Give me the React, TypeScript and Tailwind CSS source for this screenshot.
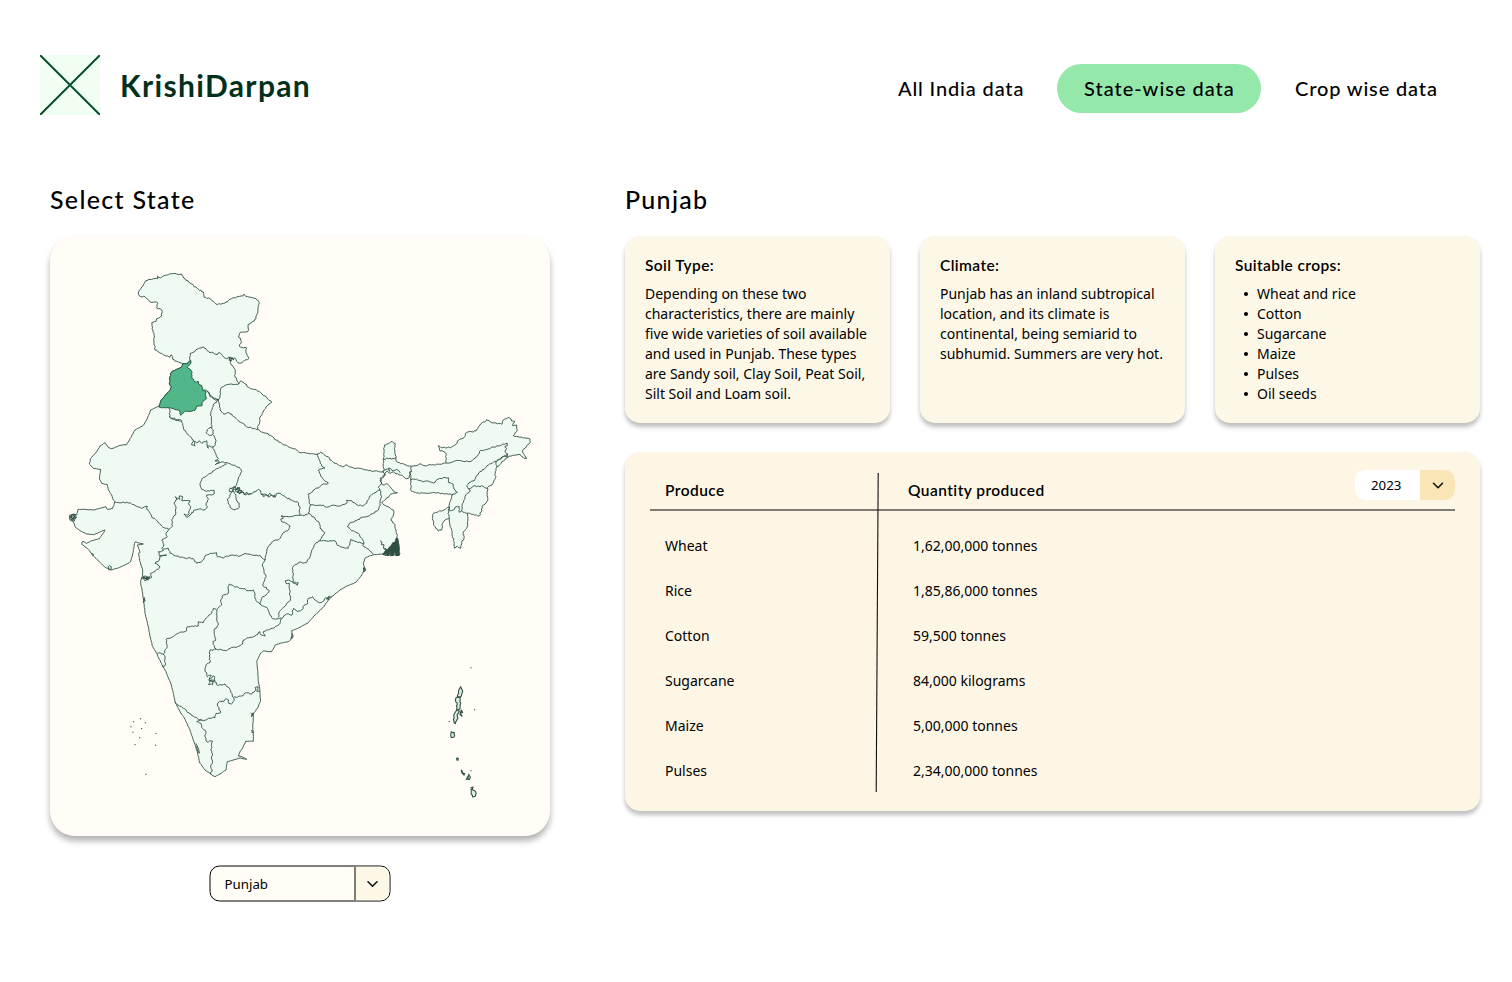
import React from "react";

type Point = [number, number];

// Map sections are stored at three units per pixel, relative to a section origin.
function section(ox: number, oy: number, data: string): Point[] {
  return data
    .trim()
    .split(/\s+/)
    .map((pair) => {
      const [x, y] = pair.split(",").map(Number);
      return [ox + x / 3, oy + y / 3] as Point;
    });
}

const north = (d: string) => section(130, 262, d);
const west = (d: string) => section(60, 400, d);
const central = (d: string) => section(200, 400, d);
const northEast = (d: string) => section(370, 405, d);
const south = (d: string) => section(130, 550, d);
const east = (d: string) => section(200, 530, d);
const islands = (d: string) => section(430, 655, d);

const noise = (x: number, y: number) => {
  const v = Math.sin(x * 12.9898 + y * 78.233) * 43758.5453;
  return (v - Math.floor(v)) * 2 - 1;
};

// Adds small wiggles between the surveyed points of a border.
function roughen(points: Point[], amount: number): Point[] {
  const out: Point[] = [];
  points.forEach((p, i) => {
    out.push(p);
    const q = points[i + 1];
    if (!q) return;
    const dx = q[0] - p[0];
    const dy = q[1] - p[1];
    const len = Math.hypot(dx, dy);
    const steps = Math.floor(len / 1.4);
    for (let s = 1; s < steps; s++) {
      const t = s / steps;
      const x = p[0] + dx * t;
      const y = p[1] + dy * t;
      const n = noise(x, y) * amount;
      out.push([x - (dy / len) * n, y + (dx / len) * n]);
    }
  });
  return out;
}

const toPath = (points: Point[], close = false) =>
  "M" + points.map(([x, y]) => `${x.toFixed(1)} ${y.toFixed(1)}`).join("L") + (close ? "Z" : "");

const outline: Point[] = [
  ...roughen(
    [
      ...north(
        "88,430 95,412 105,400 115,390 125,375 118,365 120,345 125,330 140,322 155,315 158,305 150,302 140,298 128,292 124,278 120,286 108,282 95,274 75,264 72,240 72,215 66,200 65,182 78,178 80,170 95,162 97,148 90,140 80,138 84,124 75,120 60,120 50,110 45,104 28,102 26,88 35,75 45,60 55,52 75,50 84,50 82,42 92,48 105,40 125,35 140,36 155,36 165,50 175,60 190,70 205,82 220,90 223,106 240,110 250,118 262,128 280,124 292,120 305,110 320,105 338,102 341,97 348,104 362,106 375,108 388,122 384,140 382,155 378,170 365,182 354,188 354,208 332,210 326,222 334,238 328,252 340,258 350,258 348,272 356,290 340,298 330,304 320,298 315,288 305,292 300,300 310,315 316,325 314,340 320,352 326,366 333,356 345,366 362,380 375,382 392,392 405,402 425,421 408,435 400,450 390,465",
      ),
      ...central(
        "180,62 172,88 185,96 200,100 215,108 228,120 245,130 260,136 275,144 290,150 300,158 320,160 345,163 352,162 362,156 372,164 385,170 390,180 405,190 415,195 432,200 438,194 448,200 465,206 480,205 495,210 515,214 535,214 548,216 553,208 550,195",
      ),
      ...northEast(
        "40,162 42,140 43,120 55,116 66,109 76,116 73,130 76,150 78,160 80,170 92,176 108,180 124,184 135,182 150,176 165,182 185,180 205,178 229,174 228,145 222,140 210,138 205,122 218,128 232,128 245,126 258,118 262,108 280,100 290,82 305,80 318,78 330,60 350,44 362,52 378,54 395,58 400,45 418,38 425,48 435,50 428,62 440,60 442,75 430,92 445,95 455,96 468,100 480,102 481,112 472,120 458,135 460,145 470,160 462,160 450,148 438,150 418,153 400,168 380,187 376,200 376,220 366,240 352,248 352,268 354,285 340,300 328,333 310,328 292,325 294,345 290,370 280,380 282,400 275,412 272,430 262,424 254,430 252,410 246,385 240,360 238,340 225,345 218,355 215,375 205,378 195,365 188,345 188,328 205,320 222,315 238,306 240,290 245,275 250,268 230,266 200,264 170,265 140,264 124,258 122,225 122,212 120,200 118,218 105,220 92,210 78,206 70,200 60,205 52,198 45,205 42,215 30,228 38,240 52,236 60,245 70,258 82,263 72,264 58,272 48,282 35,292 42,300 60,308 70,315 70,330 62,345 72,355 78,375 82,400 86,420 88,450 45,452 45,440",
      ),
    ],
    0.65,
  ),
  ...roughen(
    [
      ...east(
        "550,72 520,74 508,78 495,85 490,100 495,118 485,135 468,157 440,168 420,180 405,192 385,210 370,232 345,255 325,278 300,292 275,302 276,325 265,335 240,340 226,345 215,365 205,365 192,362 180,372 170,395",
      ),
      ...south(
        "382,350 385,395 388,410 390,425 391,455 385,470 370,492 370,510 368,530 370,545 370,574 347,574 340,590 330,605 325,618 335,620 350,628 330,624 310,630 292,635 288,660 270,672 255,680 242,672 225,660 210,640 200,600 190,570 180,540 165,508 150,485 135,455 130,430 122,400 108,365 100,352 88,328 80,310 68,290 60,260 55,230 45,190 42,160 36,120 32,100 32,92 38,75",
      ),
      ...west(
        "248,510 240,485 235,460 240,458 232,435 250,432 225,426 222,440 218,465 212,485 195,495 175,504 155,510 135,502 118,485 98,465 85,448 65,432 68,424 80,430 95,422 118,416 128,402 135,390 120,396 100,404 80,402 60,392 45,380 42,368 30,360 28,346 42,342 50,345 54,328 75,328 100,330 120,325 138,320 142,328 158,325 165,305 160,300 155,285 145,270 142,254 125,250 118,235 122,208 100,205 88,192 92,175 110,155 120,138 135,128 145,142 155,146 180,136 200,134 215,108 225,90 250,76 262,55 272,30 298,18",
      ),
    ],
    0.2,
  ),
];

const punjab = roughen(
  north(
    "88,430 95,412 105,400 115,390 125,375 118,365 120,345 125,330 140,322 155,315 158,305 170,305 182,295 182,305 172,315 185,328 185,345 195,360 205,358 206,366 215,370 218,385 228,388 226,398 230,410 218,418 215,432 200,432 195,445 180,448 165,448 152,460 148,445 130,440 115,437 88,436",
  ),
  0.45,
);

const borders: Point[][] = [
  north("158,305 170,305 180,295 180,275 195,268 205,260 220,254 228,260 240,272 250,272 262,278 268,272 280,284 290,290 300,285 305,292"),
  north("296,284 304,296 296,294 306,286 312,294 304,288"),
  north("218,385 230,385 238,398 250,408 265,413 270,400 272,380 285,370 305,366 326,366"),
  north("232,388 238,392 240,404 248,406 256,414 268,412"),
  central("55,-1 58,12 60,30 72,42 88,38 108,55 125,68 140,80 155,84 172,88"),
  central("55,0 40,15 32,35 34,60 36,82 25,86 18,98 28,106 40,102 40,90 34,84"),
  central("40,105 48,120 46,135 38,142 45,158 55,175 45,182 58,184 46,194 52,190 65,186 85,190 100,196 118,202 125,215 115,235 110,255 105,262"),
  north("115,437 120,450 118,465 130,472 152,478"),
  west("328,50 340,55 365,62 372,90 385,105 400,120 395,135 405,138 402,124 410,128 418,122 425,130 440,122 445,145 442,138 460,140"),
  west("500,192 475,205 450,220 425,238 420,252 425,268 440,274 462,270 462,282 440,285 445,298 438,310 442,320 432,330 420,326 405,330 390,345 380,352 372,342 385,345 388,332 392,320 385,310 390,302 365,302 368,290 358,288 360,298 345,290 352,298 342,308 348,325 346,345 335,360 338,378 325,388"),
  west("165,305 185,308 210,308 225,316 245,325 262,318 260,328 268,335 275,350 290,362 305,378 325,388"),
  west("325,388 318,400 322,410 305,420 312,435 305,445 310,452 295,455 300,468 320,465 300,468 298,480 285,490 300,500 285,515 272,520 275,532 268,536 260,530 258,538 252,530 245,537 256,526"),
  west("308,448 325,445 330,460 350,468 375,474 400,476 410,490 425,485 435,468 450,460 470,458 472,470 490,474 500,468 520,465 540,468"),
  central("120,468 135,460 160,466 180,466 188,475 195,480 200,455 205,440 218,425 240,415 250,398 265,390 270,378 258,370 245,365 242,358 250,355 243,348 270,350 298,346"),
  central("105,262 90,265 88,275 100,272 90,285 82,300 90,322 105,330 118,322 118,310 108,300 108,285 98,272 104,258 108,270 118,262 112,278 122,270 118,282 130,276 135,285 142,280 155,282 165,275 175,268 182,272 185,285 195,282 205,288 210,280 225,292 228,282 240,280 255,290 275,300 295,308 300,325 298,346 312,348 325,340"),
  central("92,264 104,268 112,266 106,274 116,276 112,262 120,266 116,280 126,278 124,270 132,284 140,276 146,284 154,280"),
  central("186,280 190,290 198,284 206,292 214,286 222,292 224,284"),
  central("352,162 358,180 365,198 375,204 355,210 362,228 370,238 385,250 365,255 345,268 325,282 328,310 332,315 325,340"),
  central("332,315 350,316 370,315 380,322 400,315 420,318 440,310 440,300 455,302 468,312 485,318 500,310 508,290 525,278 540,270"),
  central("548,216 555,225 540,235 545,250 535,262 540,270 545,290 540,310 535,330 520,340 500,350 485,352 470,362 448,370 442,380 455,392 475,400 485,415 492,430"),
  central("548,216 562,206 570,214 566,204 580,212 590,208 600,218"),
  central("492,432 470,425 452,418 445,445 420,440 410,432 405,422 385,424 360,422"),
  central("325,340 345,355 358,370 360,385 375,398 365,410 360,422"),
  central("492,430 488,436 508,450 520,464"),
  east("360,32 345,42 335,60 330,80 318,98 295,98 278,112 280,135 278,155 295,158 292,166 270,152 256,152 258,160 268,160 268,175 272,210 258,225 238,245 235,262"),
  east("195,88 188,100 192,125 198,140 188,165 208,182 200,192 185,205 180,222 168,212 165,195 160,180 140,182 135,176 118,175 88,162 84,175 85,190 70,195 62,210 65,225 50,240"),
  east("180,222 200,232 208,250 218,266 235,266 245,265 240,280 225,292 205,300 190,305 196,318 184,315 180,305 165,318 150,322 130,330 128,342 112,350 95,352 80,362 50,358"),
  east("245,265 260,252 275,256 280,235 292,245 305,240 312,226 322,222 325,205 338,200 345,210 358,218 372,212 378,202 385,210 388,198 380,208 395,198"),
  east("50,240 50,265 55,285 42,300 48,330 38,335 45,355 50,358"),
  south("258,178 250,175 245,190 225,208 220,218 205,215 205,228 172,230 170,242 145,250 120,265 108,268 112,290 100,312 90,308 82,310"),
  south("100,312 105,325 106,345 100,352 98,346"),
  south("258,298 240,300 238,318 240,338 228,345 225,360 232,380 244,376 238,388 252,378 255,392 244,390 235,403 248,404 250,394 236,390 258,396 260,404 275,405 285,402 300,418 305,430 310,442"),
  south("310,442 335,438 350,428 365,432 378,420 376,412 384,410 380,424 390,425"),
  south("310,442 312,452 304,462 296,460 296,450 288,446 282,454 268,455 262,465 272,488 258,490 255,503 235,505 220,512 205,508 180,492 160,475 145,466 135,455"),
  south("215,508 200,515 212,520 215,532 228,545 225,560 230,575 248,574 242,600 248,612 244,625 248,635 242,650 246,660 242,672"),
  northEast("40,162 60,160 78,160"),
  northEast("124,184 125,200 120,200"),
  northEast("229,174 245,172 262,166 285,170 305,168 325,148 332,136 350,134 372,126 395,120 412,115 412,122 404,125 410,130 405,138 414,150 406,154 414,146"),
  northEast("405,152 385,165 370,172 355,180 345,190 330,200 318,215 312,228 305,228 290,242 300,258"),
  northEast("414,154 400,155 378,170 380,187"),
  northEast("122,225 140,222 158,230 175,228 190,234 205,222 220,218 235,218 235,232 250,238 252,252 262,262 250,268"),
  northEast("300,258 292,265 285,275 278,295 275,318 292,325"),
  northEast("296,252 310,243 320,245 340,244 352,252"),
  northEast("275,318 268,322 268,305 258,305 250,315 240,318 238,306 234,325 238,340"),
];

const coves: Point[][] = [
  west("28,356 38,342 44,350 34,360 46,346 38,358 50,352 40,348 30,350 44,362"),
  west("30,348 40,356 46,344 36,344 32,358 42,364 48,350"),
  west("145,500 146,509 153,509 154,500 148,497 145,500"),
  west("94,460 100,462 98,468"),
  west("252,532 262,540 270,530 258,534 266,540"),
  south("40,82 50,80 54,88 44,92 40,84 52,86"),
  south("38,145 46,150 40,158 44,142"),
  south("198,580 206,598 208,610 202,600 200,588"),
  south("362,490 370,494 364,500 368,488"),
  south("364,540 370,548 364,546"),
  east("276,310 280,320 272,326 278,316"),
  east("490,112 498,118 492,126 490,114 496,122"),
];

const delta = toPath(
  central("598,466 588,467 584,455 580,467 572,466 570,455 567,466 560,466 558,455 555,464 548,464 558,450 554,444 562,450 568,442 574,436 578,428 586,426 588,415 593,416 597,436"),
  true,
);
const creek = toPath(central("540,422 546,426 544,434 552,434 550,444 556,450"));

const andaman: Point[][] = [
  islands("92,95 97,105 95,118 90,128 82,125 86,105"),
  islands("78,128 90,126 92,145 90,162 80,164 82,148 76,136"),
  islands("80,165 88,168 82,178 84,190 76,206 70,194 72,178"),
  islands("94,165 98,172 92,174 96,184 90,178"),
  islands("64,230 73,232 72,246 65,248 62,240"),
  islands("80,309 85,310 84,316 80,315"),
  islands("94,345 98,354 104,356 102,361 96,354"),
  islands("116,358 121,366 118,374 108,373 112,365 114,370"),
  islands("123,398 129,396 127,404 137,410 136,424 128,426 124,410"),
];

const specks: Point[] = [
  ...islands("122,37 133,163 57,198 122,346"),
  ...south("31,505 45,517 10,514 34,534 28,562 8,545 14,582 77,549 76,584 47,671 2,529"),
];

function IndiaMap() {
  return (
    <svg viewBox="50 236 500 600" className="h-full w-full" fill="none" stroke="#2f4f43" strokeWidth="0.9" strokeLinejoin="round">
      <path d={toPath(outline, true)} fill="#effaf2" />
      {borders.map((b, i) => (
        <path key={i} d={toPath(roughen(b, 0.65))} />
      ))}
      {coves.map((b, i) => (
        <path key={i} d={toPath(b)} />
      ))}
      <path d={delta} fill="#2f4f43" />
      <path d={creek} />
      <path d={toPath(punjab, true)} fill="#52b788" stroke="#1f4f3c" />
      {andaman.map((b, i) => (
        <path key={i} d={toPath(roughen(b, 0.7), true)} fill="#dcebe2" strokeWidth="1.1" />
      ))}
      {specks.map(([x, y], i) => (
        <path key={i} d={`M${x} ${y}l.6 1`} strokeWidth="1.1" />
      ))}
    </svg>
  );
}

function Chevron() {
  return (
    <svg viewBox="0 0 12 8" className="h-2 w-3" fill="none" stroke="#111" strokeWidth="1.6" strokeLinecap="round" strokeLinejoin="round">
      <path d="M1.5 2.3 6 6.7l4.5-4.4" />
    </svg>
  );
}

function InfoCard({ title, children }: { title: string; children: React.ReactNode }) {
  return (
    <section className="h-[187px] w-[265px] rounded-[15px] bg-[#fdf7e7] px-5 pt-[19px] shadow-[0_4px_4px_rgba(0,0,0,0.25)]">
      <h3 className="font-['Lato',sans-serif] text-[15.5px] leading-5 font-semibold tracking-[0.4px]">{title}</h3>
      <div className="mt-[9px] text-sm leading-5 whitespace-nowrap">{children}</div>
    </section>
  );
}

const soil = [
  "Depending on these two",
  "characteristics, there are mainly",
  "five wide varieties of soil available",
  "and used in Punjab. These types",
  "are Sandy soil, Clay Soil, Peat Soil,",
  "Silt Soil and Loam soil.",
];
const climate = [
  "Punjab has an inland subtropical",
  "location, and its climate is",
  "continental, being semiarid to",
  "subhumid. Summers are very hot.",
];
const crops = ["Wheat and rice", "Cotton", "Sugarcane", "Maize", "Pulses", "Oil seeds"];
const produce = [
  ["Wheat", "1,62,00,000 tonnes"],
  ["Rice", "1,85,86,000 tonnes"],
  ["Cotton", "59,500 tonnes"],
  ["Sugarcane", "84,000 kilograms"],
  ["Maize", "5,00,000 tonnes"],
  ["Pulses", "2,34,00,000 tonnes"],
];

export default function App() {
  return (
    <div className="h-[982px] w-[1512px] overflow-hidden bg-white font-['Noto_Sans',sans-serif] text-black">
      <header className="flex h-[115px] items-end justify-between pr-[75px] pl-10 font-['Lato',sans-serif]">
        <div className="flex h-[60px] items-center gap-5">
          <svg viewBox="0 0 60 60" className="h-[60px] w-[60px] bg-[#f0fff1]" stroke="#0b4f2f" strokeWidth="2" strokeLinecap="round">
            <path d="M.7.7 59.3 59.3M59.3.7.7 59.3" />
          </svg>
          <span className="text-[30px] leading-[60px] font-bold tracking-[1.35px] text-[#03301c]">KrishiDarpan</span>
        </div>
        <nav className="mb-0.5 flex h-[49px] items-center gap-[34px] text-[20px] font-medium tracking-[0.85px] whitespace-nowrap">
          <a className="w-[125px] pb-0.5">All India data</a>
          <a className="flex h-[49px] w-[204px] items-center rounded-full bg-[#94e8a9] pb-0.5 pl-[27px] tracking-[0.98px]">State-wise data</a>
          <a className="w-[142px] pb-0.5">Crop wise data</a>
        </nav>
      </header>
      <main className="flex gap-[75px] pt-[67px] pl-[50px]">
        <div className="w-[500px]">
          <h2 className="h-[54px] font-['Lato',sans-serif] text-[25px] leading-[34px] font-medium tracking-[1.3px]">Select State</h2>
          <div className="h-[600px] rounded-[25px] bg-[#fffdf6] shadow-[0_5px_6px_rgba(0,0,0,0.3)]">
            <IndiaMap />
          </div>
          <div className="mt-[29px] ml-[159px] flex h-[36px] w-[181px] translate-x-[0.5px] translate-y-[0.5px] overflow-hidden rounded-[10px] border border-black bg-[#fffdf6] text-[13.3px]">
            <span className="flex flex-1 items-center pt-px pl-[14px]">Punjab</span>
            <span className="flex w-[35px] items-center justify-center border-l border-black bg-[#fdf7e7]">
              <Chevron />
            </span>
          </div>
        </div>
        <div className="w-[855px]">
          <h2 className="h-[54px] font-['Lato',sans-serif] text-[25px] leading-[34px] font-medium tracking-[1.3px]">Punjab</h2>
          <div className="flex gap-[30px]">
            <InfoCard title="Soil Type:">
              {soil.map((l) => (
                <p key={l}>{l}</p>
              ))}
            </InfoCard>
            <InfoCard title="Climate:">
              {climate.map((l) => (
                <p key={l}>{l}</p>
              ))}
            </InfoCard>
            <InfoCard title="Suitable crops:">
              <ul>
                {crops.map((l) => (
                  <li key={l} className="flex items-center pl-[9px]">
                    <span className="mr-[9px] h-1 w-1 rounded-full bg-black" />
                    {l}
                  </li>
                ))}
              </ul>
            </InfoCard>
          </div>
          <section className="relative mt-[29px] h-[359px] rounded-[15px] bg-[#fdf6e5] shadow-[0_4px_4px_rgba(0,0,0,0.25)]">
            <div className="mr-[25px] ml-[25px] flex h-[59px] border-b-2 border-[#7f7b73] pl-[15px] font-['Lato',sans-serif] text-[15.5px] font-semibold tracking-[0.45px]">
              <span className="w-[243px] pt-[28px] leading-5">Produce</span>
              <span className="flex-1 pt-[28px] leading-5">Quantity produced</span>
              <div className="mt-[18px] flex h-[30px] w-[100px] overflow-hidden rounded-[10px] bg-white font-['Noto_Sans',sans-serif] text-[13.3px] font-normal tracking-normal">
                <span className="flex w-[65px] items-center pt-0.5 pl-4">2023</span>
                <span className="flex w-[35px] items-center justify-center bg-[#f9e5b6]">
                  <Chevron />
                </span>
              </div>
            </div>
            <div className="pt-3 pl-10 text-sm">
              {produce.map(([name, amount]) => (
                <div key={name} className="flex h-[45px] items-center">
                  <span className="w-[248px]">{name}</span>
                  <span>{amount}</span>
                </div>
              ))}
            </div>
            <svg viewBox="0 0 4 320" className="absolute top-[21px] left-[250px] h-[320px] w-1" stroke="#111" strokeWidth="1.1">
              <path d="M3.2 0 1.2 319" />
            </svg>
          </section>
        </div>
      </main>
    </div>
  );
}
